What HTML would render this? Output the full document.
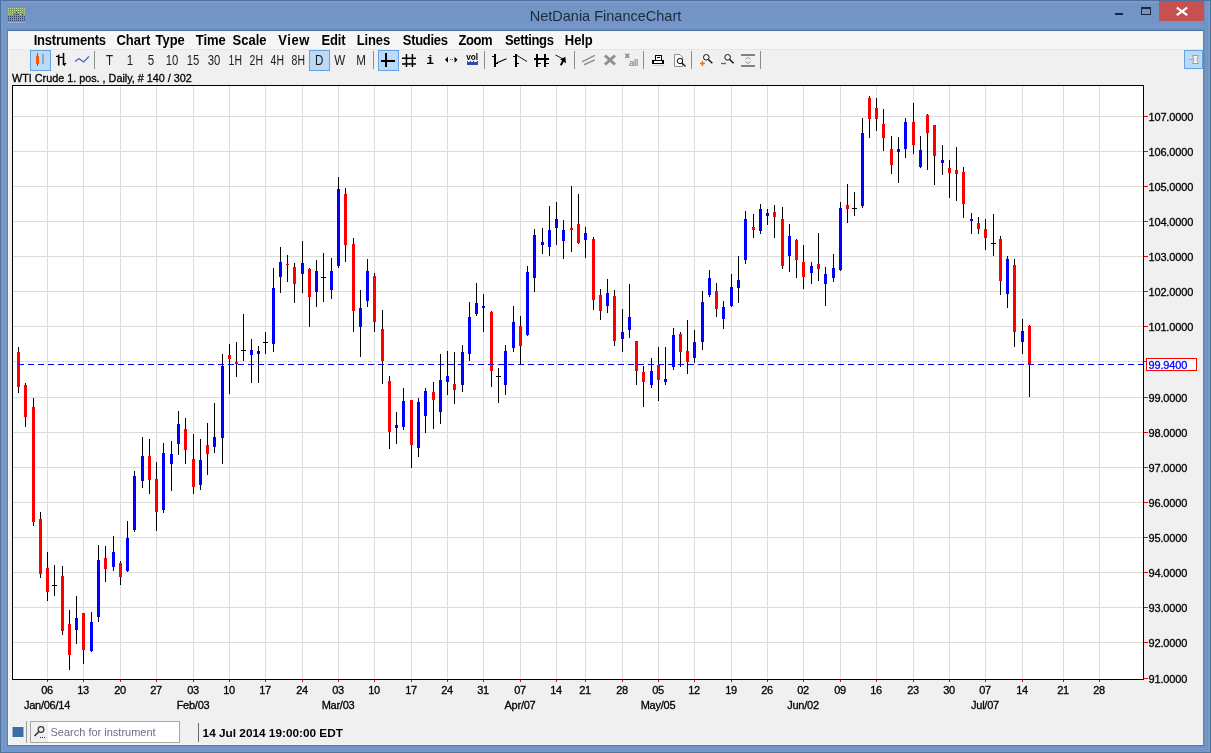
<!DOCTYPE html><html><head><meta charset="utf-8"><title>NetDania FinanceChart</title><style>
html,body{margin:0;padding:0}
body{width:1211px;height:753px;position:relative;overflow:hidden;background:#7295c6;font-family:"Liberation Sans",sans-serif;color:#000}
.a{position:absolute;white-space:pre;line-height:1}
#content{position:absolute;left:8px;top:31px;width:1195px;height:714px;background:#f0f0f0}
#menubar{position:absolute;left:8px;top:31px;width:1195px;height:18px;background:#f6f6f6}
.m{position:absolute;top:33.5px;transform:scaleY(1.06);transform-origin:0 82%;font-weight:bold;font-size:13px;white-space:pre;line-height:14px;color:#000}
.tb{position:absolute;top:52.3px;width:21px;height:16px;text-align:center;font-size:14.5px;line-height:16px;color:#1c1c1c;white-space:pre}
.tb span{display:inline-block;transform:scaleX(.8);transform-origin:50% 50%}
.ax{position:absolute;font-size:11px;letter-spacing:-0.16px;line-height:11px;white-space:pre;color:#000}
.xl{position:absolute;font-size:11px;letter-spacing:-0.25px;line-height:11px;white-space:pre;color:#000;width:80px;text-align:center}
svg{position:absolute;left:0;top:0;z-index:1}
#txt{position:absolute;left:0;top:0;width:1211px;height:753px;z-index:2;will-change:transform}
.ax,.xl,.lbl{-webkit-text-stroke:0.3px currentColor}

</style></head><body>
<div id="content"></div><div id="menubar"></div>
<svg width="1211" height="753" viewBox="0 0 1211 753"><g shape-rendering="crispEdges"><rect x="0" y="0" width="1211" height="1" fill="#50709f"/><rect x="0" y="1" width="1211" height="1" fill="#7a9bcb"/><rect x="0" y="2" width="1211" height="1" fill="#7a9bcb"/><rect x="7" y="24" width="1197" height="1" fill="#6f99d0"/><rect x="7" y="25" width="1197" height="1" fill="#7f94c4"/><rect x="7" y="26" width="1197" height="1" fill="#7f94c4"/><rect x="7" y="27" width="1197" height="1" fill="#7a98d0"/><rect x="7" y="28" width="1197" height="1" fill="#6690c8"/><rect x="7" y="29" width="1197" height="1" fill="#6690c8"/><rect x="7" y="30" width="1197" height="1" fill="#4f709a"/><rect x="0" y="0" width="1" height="753" fill="#4f739e"/><rect x="1" y="1" width="1" height="752" fill="#7096c4"/><rect x="2" y="1" width="1" height="752" fill="#7d9ecf"/><rect x="3" y="1" width="1" height="752" fill="#7191c8"/><rect x="4" y="1" width="1" height="752" fill="#7393cb"/><rect x="5" y="1" width="1" height="752" fill="#7a9ccb"/><rect x="6" y="1" width="1" height="752" fill="#7096c0"/><rect x="7" y="30" width="1" height="723" fill="#5b80ad"/><rect x="1203" y="30" width="1" height="723" fill="#6882a8"/><rect x="1204" y="1" width="1" height="752" fill="#6c8eba"/><rect x="1205" y="1" width="1" height="752" fill="#7396c6"/><rect x="1206" y="1" width="1" height="752" fill="#7396c6"/><rect x="1207" y="1" width="1" height="752" fill="#6f92c2"/><rect x="1208" y="1" width="1" height="752" fill="#7a9ac8"/><rect x="1209" y="1" width="1" height="752" fill="#7a9cc8"/><rect x="1210" y="0" width="1" height="753" fill="#4c6c98"/><rect x="7" y="745" width="1197" height="1" fill="#5a7498"/><rect x="7" y="746" width="1197" height="1" fill="#7098d0"/><rect x="6" y="747" width="1199" height="1" fill="#6690cc"/><rect x="5" y="748" width="1201" height="1" fill="#8098d0"/><rect x="4" y="749" width="1203" height="1" fill="#7a90c0"/><rect x="3" y="750" width="1205" height="1" fill="#7095c4"/><rect x="2" y="751" width="1207" height="1" fill="#6f9ad2"/><rect x="0" y="752" width="1211" height="1" fill="#55759a"/><rect x="8" y="744" width="1195" height="1" fill="#f9f9f9"/><rect x="8" y="50" width="1" height="695" fill="#f7f6f4"/><rect x="1202" y="70" width="1" height="675" fill="#edf2fb"/><rect x="1159" y="1" width="45" height="20" fill="#c75050"/><rect x="1141.5" y="8" width="9" height="6.5" fill="none" stroke="#1c2636" stroke-width="1"/><rect x="1141" y="7" width="10" height="2" fill="#1c2636"/><rect x="1115" y="13" width="8" height="2" fill="#1c2636"/></g><path d="M1176.8 7.6 L1187.2 15.2 M1187.2 7.6 L1176.8 15.2" stroke="#fff" stroke-width="2.1" fill="none"/><g shape-rendering="crispEdges" opacity="0.72"><rect x="8" y="8" width="1" height="1" fill="#dff08a"/><rect x="10" y="8" width="1" height="1" fill="#dff08a"/><rect x="12" y="8" width="1" height="1" fill="#dff08a"/><rect x="14" y="8" width="1" height="1" fill="#dff08a"/><rect x="16" y="8" width="1" height="1" fill="#dff08a"/><rect x="18" y="8" width="1" height="1" fill="#dff08a"/><rect x="20" y="8" width="1" height="1" fill="#dff08a"/><rect x="22" y="8" width="1" height="1" fill="#dff08a"/><rect x="24" y="8" width="1" height="1" fill="#dff08a"/><rect x="8" y="10" width="1" height="1" fill="#dff08a"/><rect x="10" y="10" width="1" height="1" fill="#dff08a"/><rect x="12" y="10" width="1" height="1" fill="#dff08a"/><rect x="14" y="10" width="1" height="1" fill="#dff08a"/><rect x="16" y="10" width="1" height="1" fill="#dff08a"/><rect x="18" y="10" width="1" height="1" fill="#dff08a"/><rect x="20" y="10" width="1" height="1" fill="#dff08a"/><rect x="22" y="10" width="1" height="1" fill="#dff08a"/><rect x="24" y="10" width="1" height="1" fill="#dff08a"/><rect x="8" y="12" width="1" height="1" fill="#dff08a"/><rect x="10" y="12" width="1" height="1" fill="#dff08a"/><rect x="12" y="12" width="1" height="1" fill="#dff08a"/><rect x="14" y="12" width="1" height="1" fill="#dff08a"/><rect x="16" y="12" width="1" height="1" fill="#0e2a1a"/><rect x="18" y="12" width="1" height="1" fill="#dff08a"/><rect x="20" y="12" width="1" height="1" fill="#dff08a"/><rect x="22" y="12" width="1" height="1" fill="#dff08a"/><rect x="24" y="12" width="1" height="1" fill="#dff08a"/><rect x="8" y="14" width="1" height="1" fill="#dff08a"/><rect x="10" y="14" width="1" height="1" fill="#dff08a"/><rect x="12" y="14" width="1" height="1" fill="#dff08a"/><rect x="14" y="14" width="1" height="1" fill="#0e2a1a"/><rect x="16" y="14" width="1" height="1" fill="#0e2a1a"/><rect x="18" y="14" width="1" height="1" fill="#0e2a1a"/><rect x="20" y="14" width="1" height="1" fill="#dff08a"/><rect x="22" y="14" width="1" height="1" fill="#0e2a1a"/><rect x="24" y="14" width="1" height="1" fill="#dff08a"/><rect x="8" y="16" width="1" height="1" fill="#0d1f45"/><rect x="10" y="16" width="1" height="1" fill="#0d1f45"/><rect x="12" y="16" width="1" height="1" fill="#0d1f45"/><rect x="14" y="16" width="1" height="1" fill="#0d1f45"/><rect x="16" y="16" width="1" height="1" fill="#0d1f45"/><rect x="18" y="16" width="1" height="1" fill="#0d1f45"/><rect x="20" y="16" width="1" height="1" fill="#0d1f45"/><rect x="22" y="16" width="1" height="1" fill="#0d1f45"/><rect x="24" y="16" width="1" height="1" fill="#0d1f45"/><rect x="8" y="18" width="1" height="1" fill="#0d1f45"/><rect x="10" y="18" width="1" height="1" fill="#0d1f45"/><rect x="12" y="18" width="1" height="1" fill="#0d1f45"/><rect x="14" y="18" width="1" height="1" fill="#0d1f45"/><rect x="16" y="18" width="1" height="1" fill="#0d1f45"/><rect x="18" y="18" width="1" height="1" fill="#0d1f45"/><rect x="20" y="18" width="1" height="1" fill="#0d1f45"/><rect x="22" y="18" width="1" height="1" fill="#0d1f45"/><rect x="24" y="18" width="1" height="1" fill="#0d1f45"/><rect x="8" y="20" width="1" height="1" fill="#0d1f45"/><rect x="10" y="20" width="1" height="1" fill="#0d1f45"/><rect x="12" y="20" width="1" height="1" fill="#0d1f45"/><rect x="14" y="20" width="1" height="1" fill="#0d1f45"/><rect x="16" y="20" width="1" height="1" fill="#0d1f45"/><rect x="18" y="20" width="1" height="1" fill="#0d1f45"/><rect x="20" y="20" width="1" height="1" fill="#0d1f45"/><rect x="22" y="20" width="1" height="1" fill="#0d1f45"/><rect x="24" y="20" width="1" height="1" fill="#0d1f45"/><rect x="8" y="22" width="1" height="1" fill="#c8d4ec"/><rect x="10" y="22" width="1" height="1" fill="#c8d4ec"/><rect x="12" y="22" width="1" height="1" fill="#c8d4ec"/><rect x="14" y="22" width="1" height="1" fill="#c8d4ec"/><rect x="16" y="22" width="1" height="1" fill="#c8d4ec"/><rect x="18" y="22" width="1" height="1" fill="#c8d4ec"/><rect x="20" y="22" width="1" height="1" fill="#c8d4ec"/><rect x="22" y="22" width="1" height="1" fill="#c8d4ec"/><rect x="24" y="22" width="1" height="1" fill="#c8d4ec"/></g><g shape-rendering="crispEdges"><rect x="8" y="49" width="1195" height="1" fill="#e6e6e6"/><rect x="30" y="50" width="21" height="21" fill="#62a3e6"/><rect x="31" y="51" width="19" height="19" fill="#bcd9f5"/><rect x="309" y="50" width="21" height="21" fill="#62a3e6"/><rect x="310" y="51" width="19" height="19" fill="#bcd9f5"/><rect x="378" y="50" width="21" height="21" fill="#62a3e6"/><rect x="379" y="51" width="19" height="19" fill="#bcd9f5"/><rect x="1184" y="50" width="19" height="19" fill="#62a3e6"/><rect x="1185" y="51" width="17" height="17" fill="#bcd9f5"/><rect x="94" y="51" width="1" height="18" fill="#8c8c8c"/><rect x="373" y="51" width="1" height="18" fill="#8c8c8c"/><rect x="484" y="51" width="1" height="18" fill="#8c8c8c"/><rect x="574" y="51" width="1" height="18" fill="#8c8c8c"/><rect x="643" y="51" width="1" height="18" fill="#8c8c8c"/><rect x="691" y="51" width="1" height="18" fill="#8c8c8c"/><rect x="760" y="51" width="1" height="18" fill="#8c8c8c"/><rect x="37" y="53" width="1" height="13" fill="#d04000"/><rect x="36" y="56" width="3" height="8" fill="#ff5a00"/><rect x="42" y="54" width="2" height="10" fill="#86a6d2"/><g shape-rendering="geometricPrecision"><rect x="57.9" y="54.7" width="1.6" height="10.8" fill="#000"/><rect x="56" y="55.8" width="2" height="1.2" fill="#000"/><rect x="59.4" y="56.8" width="3.4" height="1.2" fill="#000"/><rect x="62.7" y="53" width="1.6" height="12.2" fill="#000"/><rect x="64.2" y="63" width="2" height="1.2" fill="#000"/><rect x="64" y="64" width="1.2" height="1.8" fill="#000"/></g><rect x="385" y="53" width="2" height="14" fill="#000"/><rect x="381" y="60" width="14" height="2" fill="#000"/><g shape-rendering="geometricPrecision"><rect x="405.7" y="54" width="1.5" height="13" fill="#000"/><rect x="411.7" y="54" width="1.5" height="13" fill="#000"/><rect x="402" y="57.5" width="14" height="1.5" fill="#000"/><rect x="402" y="63.2" width="14" height="1.5" fill="#000"/></g><rect x="467" y="62" width="11" height="3" fill="#2a4ea8"/><rect x="467" y="61" width="1" height="1" fill="#2a4ea8"/><rect x="470" y="61" width="1" height="1" fill="#2a4ea8"/><rect x="473" y="61" width="1" height="1" fill="#2a4ea8"/><rect x="477" y="61" width="1" height="1" fill="#2a4ea8"/><rect x="494" y="54" width="2" height="13" fill="#000"/><rect x="492" y="56" width="2" height="1" fill="#000"/><rect x="496" y="63" width="2" height="1" fill="#000"/><rect x="515" y="54" width="2" height="13" fill="#000"/><rect x="513" y="56" width="2" height="1" fill="#000"/><rect x="517" y="63" width="2" height="1" fill="#000"/><rect x="536" y="54" width="2" height="13" fill="#000"/><rect x="544" y="54" width="2" height="13" fill="#000"/><rect x="534" y="58" width="15" height="2" fill="#000"/><rect x="538" y="63" width="3" height="1" fill="#000"/><rect x="546" y="63" width="3" height="1" fill="#000"/><rect x="741" y="54" width="14" height="2" fill="#808080"/><rect x="741" y="65" width="14" height="2" fill="#808080"/></g><path d="M75 61.5 L79 58.5 L83.5 62 L89 56.5" stroke="#4464c4" stroke-width="1.25" fill="none"/><path d="M496.5 63 L506.5 58.7" stroke="#000" stroke-width="1.1" fill="none"/><path d="M517 55.5 L527 61.5" stroke="#000" stroke-width="0.9" fill="none"/><path d="M555.5 55 L564 59.5" stroke="#000" stroke-width="0.9" fill="none"/><path d="M560.8 65.3 L563.6 60" stroke="#000" stroke-width="2" fill="none"/><path d="M565.3 56.8 L566 63.2 L560.2 59.6 Z" fill="#000"/><path d="M582 61.9 L594.8 55.4 M584 64.8 L594.8 59.9" stroke="#8e8e8e" stroke-width="1.5" fill="none"/><path d="M605 55.5 L615 64.5 M615 55.5 L605 64.5" stroke="#8e8e8e" stroke-width="3" fill="none"/><path d="M625.3 53.8 L629.2 58 M629.2 53.8 L625.3 58" stroke="#808080" stroke-width="1.3" fill="none"/><path d="M445 59.7 L448 56.7 L448 62.7 Z M457.5 59.7 L454.5 56.7 L454.5 62.7 Z" fill="#000"/><rect x="450" y="59" width="1" height="1" fill="#555"/><rect x="452" y="59" width="1" height="1" fill="#555"/><g shape-rendering="crispEdges"><rect x="655" y="55" width="6" height="6" fill="#fff" stroke="#000" stroke-width="1"/><rect x="657" y="57" width="3" height="1" fill="#000"/><rect x="652" y="60" width="12" height="4" fill="#000"/><rect x="654" y="61" width="8" height="2" fill="#fff"/><rect x="653" y="65" width="11" height="1" fill="#b8d4f0"/></g><path d="M674.5 54.5 L680 54.5 L682.5 57 L682.5 66.5 L674.5 66.5 Z" fill="#fafafa" stroke="#909090" stroke-width="1"/><circle cx="680" cy="61" r="2.7" fill="#f4f8ff" stroke="#111" stroke-width="1"/><path d="M682 63 L685.5 66.5" stroke="#111" stroke-width="1.3"/><circle cx="706.3" cy="57.3" r="2.8" fill="#f6f6f6" stroke="#111" stroke-width="1"/><path d="M708.4 59.4 L712.3 63.3" stroke="#111" stroke-width="1.4"/><path d="M700 63.5 L705 63.5 M702.5 61 L702.5 66" stroke="#ff6a00" stroke-width="1.4"/><circle cx="727.6" cy="57.3" r="2.8" fill="#f6f6f6" stroke="#111" stroke-width="1"/><path d="M729.7 59.4 L733.6 63.3" stroke="#111" stroke-width="1.4"/><path d="M721 63.5 L726 63.5" stroke="#3a6fd0" stroke-width="1.4"/><path d="M745.5 59.3 L748 57.3 L750.5 59.3 M745.5 61.6 L748 63.6 L750.5 61.6" stroke="#9a9a9a" stroke-width="1" fill="none"/><path d="M1192.5 55.5 L1198.5 55.5 L1197 59.5 L1198.5 63.5 L1192.5 63.5 L1194 59.5 Z" fill="#f4f4ee" stroke="#9c9cac" stroke-width="1"/><path d="M1189 59.5 L1193 59.5" stroke="#a4a4b4" stroke-width="1"/><g shape-rendering="crispEdges"><rect x="12" y="85" width="1132" height="595" fill="#000"/><rect x="13" y="86" width="1130" height="593" fill="#fff"/><rect x="13" y="642" width="1130" height="1" fill="#dcdcdc"/><rect x="13" y="607" width="1130" height="1" fill="#dcdcdc"/><rect x="13" y="572" width="1130" height="1" fill="#dcdcdc"/><rect x="13" y="537" width="1130" height="1" fill="#dcdcdc"/><rect x="13" y="502" width="1130" height="1" fill="#dcdcdc"/><rect x="13" y="467" width="1130" height="1" fill="#dcdcdc"/><rect x="13" y="432" width="1130" height="1" fill="#dcdcdc"/><rect x="13" y="397" width="1130" height="1" fill="#dcdcdc"/><rect x="13" y="361" width="1130" height="1" fill="#dcdcdc"/><rect x="13" y="326" width="1130" height="1" fill="#dcdcdc"/><rect x="13" y="291" width="1130" height="1" fill="#dcdcdc"/><rect x="13" y="256" width="1130" height="1" fill="#dcdcdc"/><rect x="13" y="221" width="1130" height="1" fill="#dcdcdc"/><rect x="13" y="186" width="1130" height="1" fill="#dcdcdc"/><rect x="13" y="151" width="1130" height="1" fill="#dcdcdc"/><rect x="13" y="116" width="1130" height="1" fill="#dcdcdc"/><rect x="47" y="86" width="1" height="593" fill="#dddddd"/><rect x="47" y="680" width="1" height="2" fill="#ff0000"/><rect x="83" y="86" width="1" height="593" fill="#dddddd"/><rect x="83" y="680" width="1" height="2" fill="#ff0000"/><rect x="120" y="86" width="1" height="593" fill="#dddddd"/><rect x="120" y="680" width="1" height="2" fill="#ff0000"/><rect x="156" y="86" width="1" height="593" fill="#dddddd"/><rect x="156" y="680" width="1" height="2" fill="#ff0000"/><rect x="193" y="86" width="1" height="593" fill="#dddddd"/><rect x="193" y="680" width="1" height="2" fill="#ff0000"/><rect x="229" y="86" width="1" height="593" fill="#dddddd"/><rect x="229" y="680" width="1" height="2" fill="#ff0000"/><rect x="265" y="86" width="1" height="593" fill="#dddddd"/><rect x="265" y="680" width="1" height="2" fill="#ff0000"/><rect x="302" y="86" width="1" height="593" fill="#dddddd"/><rect x="302" y="680" width="1" height="2" fill="#ff0000"/><rect x="338" y="86" width="1" height="593" fill="#dddddd"/><rect x="338" y="680" width="1" height="2" fill="#ff0000"/><rect x="374" y="86" width="1" height="593" fill="#dddddd"/><rect x="374" y="680" width="1" height="2" fill="#ff0000"/><rect x="411" y="86" width="1" height="593" fill="#dddddd"/><rect x="411" y="680" width="1" height="2" fill="#ff0000"/><rect x="447" y="86" width="1" height="593" fill="#dddddd"/><rect x="447" y="680" width="1" height="2" fill="#ff0000"/><rect x="483" y="86" width="1" height="593" fill="#dddddd"/><rect x="483" y="680" width="1" height="2" fill="#ff0000"/><rect x="520" y="86" width="1" height="593" fill="#dddddd"/><rect x="520" y="680" width="1" height="2" fill="#ff0000"/><rect x="556" y="86" width="1" height="593" fill="#dddddd"/><rect x="556" y="680" width="1" height="2" fill="#ff0000"/><rect x="585" y="86" width="1" height="593" fill="#dddddd"/><rect x="585" y="680" width="1" height="2" fill="#ff0000"/><rect x="622" y="86" width="1" height="593" fill="#dddddd"/><rect x="622" y="680" width="1" height="2" fill="#ff0000"/><rect x="658" y="86" width="1" height="593" fill="#dddddd"/><rect x="658" y="680" width="1" height="2" fill="#ff0000"/><rect x="694" y="86" width="1" height="593" fill="#dddddd"/><rect x="694" y="680" width="1" height="2" fill="#ff0000"/><rect x="731" y="86" width="1" height="593" fill="#dddddd"/><rect x="731" y="680" width="1" height="2" fill="#ff0000"/><rect x="767" y="86" width="1" height="593" fill="#dddddd"/><rect x="767" y="680" width="1" height="2" fill="#ff0000"/><rect x="803" y="86" width="1" height="593" fill="#dddddd"/><rect x="803" y="680" width="1" height="2" fill="#ff0000"/><rect x="840" y="86" width="1" height="593" fill="#dddddd"/><rect x="840" y="680" width="1" height="2" fill="#ff0000"/><rect x="876" y="86" width="1" height="593" fill="#dddddd"/><rect x="876" y="680" width="1" height="2" fill="#ff0000"/><rect x="913" y="86" width="1" height="593" fill="#dddddd"/><rect x="913" y="680" width="1" height="2" fill="#ff0000"/><rect x="949" y="86" width="1" height="593" fill="#dddddd"/><rect x="949" y="680" width="1" height="2" fill="#ff0000"/><rect x="985" y="86" width="1" height="593" fill="#dddddd"/><rect x="985" y="680" width="1" height="2" fill="#ff0000"/><rect x="1022" y="86" width="1" height="593" fill="#dddddd"/><rect x="1022" y="680" width="1" height="2" fill="#ff0000"/><rect x="1063" y="86" width="1" height="593" fill="#dddddd"/><rect x="1063" y="680" width="1" height="2" fill="#ff0000"/><rect x="1099" y="86" width="1" height="593" fill="#dddddd"/><rect x="1099" y="680" width="1" height="2" fill="#ff0000"/><rect x="1144" y="678" width="4" height="1" fill="#ff0000"/><rect x="1144" y="642" width="4" height="1" fill="#ff0000"/><rect x="1144" y="607" width="4" height="1" fill="#ff0000"/><rect x="1144" y="572" width="4" height="1" fill="#ff0000"/><rect x="1144" y="537" width="4" height="1" fill="#ff0000"/><rect x="1144" y="502" width="4" height="1" fill="#ff0000"/><rect x="1144" y="467" width="4" height="1" fill="#ff0000"/><rect x="1144" y="432" width="4" height="1" fill="#ff0000"/><rect x="1144" y="397" width="4" height="1" fill="#ff0000"/><rect x="1144" y="361" width="4" height="1" fill="#ff0000"/><rect x="1144" y="326" width="4" height="1" fill="#ff0000"/><rect x="1144" y="291" width="4" height="1" fill="#ff0000"/><rect x="1144" y="256" width="4" height="1" fill="#ff0000"/><rect x="1144" y="221" width="4" height="1" fill="#ff0000"/><rect x="1144" y="186" width="4" height="1" fill="#ff0000"/><rect x="1144" y="151" width="4" height="1" fill="#ff0000"/><rect x="1144" y="116" width="4" height="1" fill="#ff0000"/><rect x="1146" y="358" width="51" height="13" fill="#ff0000"/><rect x="1147" y="359" width="49" height="11" fill="#fff"/><rect x="18" y="347" width="1" height="46" fill="#000"/><rect x="17" y="352" width="3" height="35" fill="#ff0000"/><rect x="25" y="383" width="1" height="44" fill="#000"/><rect x="24" y="385" width="3" height="32" fill="#ff0000"/><rect x="33" y="398" width="1" height="128" fill="#000"/><rect x="32" y="407" width="3" height="115" fill="#ff0000"/><rect x="40" y="512" width="1" height="66" fill="#000"/><rect x="39" y="519" width="3" height="55" fill="#ff0000"/><rect x="47" y="552" width="1" height="49" fill="#000"/><rect x="46" y="568" width="3" height="24" fill="#ff0000"/><rect x="54" y="565" width="1" height="31" fill="#000"/><rect x="52" y="585" width="5" height="1" fill="#000"/><rect x="62" y="566" width="1" height="69" fill="#000"/><rect x="61" y="576" width="3" height="55" fill="#ff0000"/><rect x="69" y="610" width="1" height="60" fill="#000"/><rect x="68" y="624" width="3" height="31" fill="#ff0000"/><rect x="76" y="596" width="1" height="48" fill="#000"/><rect x="75" y="618" width="3" height="12" fill="#0000ff"/><rect x="83" y="613" width="1" height="51" fill="#000"/><rect x="82" y="613" width="3" height="37" fill="#ff0000"/><rect x="91" y="612" width="1" height="40" fill="#000"/><rect x="90" y="622" width="3" height="29" fill="#0000ff"/><rect x="98" y="545" width="1" height="77" fill="#000"/><rect x="97" y="560" width="3" height="57" fill="#0000ff"/><rect x="105" y="546" width="1" height="36" fill="#000"/><rect x="104" y="558" width="3" height="11" fill="#ff0000"/><rect x="113" y="536" width="1" height="35" fill="#000"/><rect x="112" y="552" width="3" height="15" fill="#0000ff"/><rect x="120" y="561" width="1" height="24" fill="#000"/><rect x="119" y="563" width="3" height="14" fill="#ff0000"/><rect x="127" y="521" width="1" height="51" fill="#000"/><rect x="126" y="538" width="3" height="33" fill="#0000ff"/><rect x="134" y="471" width="1" height="61" fill="#000"/><rect x="133" y="476" width="3" height="54" fill="#0000ff"/><rect x="142" y="437" width="1" height="51" fill="#000"/><rect x="141" y="456" width="3" height="25" fill="#0000ff"/><rect x="149" y="439" width="1" height="55" fill="#000"/><rect x="148" y="456" width="3" height="24" fill="#ff0000"/><rect x="156" y="462" width="1" height="69" fill="#000"/><rect x="155" y="479" width="3" height="33" fill="#ff0000"/><rect x="163" y="443" width="1" height="70" fill="#000"/><rect x="162" y="453" width="3" height="57" fill="#0000ff"/><rect x="171" y="441" width="1" height="50" fill="#000"/><rect x="170" y="454" width="3" height="10" fill="#0000ff"/><rect x="178" y="411" width="1" height="44" fill="#000"/><rect x="177" y="424" width="3" height="20" fill="#0000ff"/><rect x="185" y="418" width="1" height="46" fill="#000"/><rect x="184" y="429" width="3" height="21" fill="#ff0000"/><rect x="193" y="434" width="1" height="60" fill="#000"/><rect x="192" y="459" width="3" height="28" fill="#ff0000"/><rect x="200" y="439" width="1" height="51" fill="#000"/><rect x="199" y="460" width="3" height="25" fill="#0000ff"/><rect x="207" y="423" width="1" height="52" fill="#000"/><rect x="206" y="445" width="3" height="9" fill="#ff0000"/><rect x="214" y="403" width="1" height="50" fill="#000"/><rect x="213" y="437" width="3" height="10" fill="#0000ff"/><rect x="222" y="354" width="1" height="110" fill="#000"/><rect x="221" y="366" width="3" height="72" fill="#0000ff"/><rect x="229" y="344" width="1" height="50" fill="#000"/><rect x="228" y="355" width="3" height="4" fill="#ff0000"/><rect x="236" y="342" width="1" height="35" fill="#000"/><rect x="235" y="362" width="3" height="2" fill="#ff0000"/><rect x="243" y="314" width="1" height="47" fill="#000"/><rect x="241" y="350" width="5" height="1" fill="#000"/><rect x="251" y="339" width="1" height="44" fill="#000"/><rect x="250" y="350" width="3" height="5" fill="#0000ff"/><rect x="258" y="346" width="1" height="37" fill="#000"/><rect x="257" y="351" width="3" height="3" fill="#0000ff"/><rect x="265" y="332" width="1" height="22" fill="#000"/><rect x="263" y="342" width="5" height="1" fill="#000"/><rect x="273" y="268" width="1" height="84" fill="#000"/><rect x="272" y="288" width="3" height="56" fill="#0000ff"/><rect x="280" y="247" width="1" height="46" fill="#000"/><rect x="279" y="262" width="3" height="15" fill="#0000ff"/><rect x="287" y="255" width="1" height="27" fill="#000"/><rect x="286" y="264" width="3" height="1" fill="#ff0000"/><rect x="294" y="263" width="1" height="40" fill="#000"/><rect x="293" y="267" width="3" height="17" fill="#ff0000"/><rect x="302" y="241" width="1" height="52" fill="#000"/><rect x="301" y="263" width="3" height="11" fill="#0000ff"/><rect x="309" y="268" width="1" height="59" fill="#000"/><rect x="308" y="269" width="3" height="28" fill="#ff0000"/><rect x="316" y="260" width="1" height="47" fill="#000"/><rect x="315" y="271" width="3" height="21" fill="#0000ff"/><rect x="323" y="253" width="1" height="49" fill="#000"/><rect x="321" y="277" width="5" height="1" fill="#000"/><rect x="331" y="258" width="1" height="41" fill="#000"/><rect x="330" y="271" width="3" height="19" fill="#0000ff"/><rect x="338" y="177" width="1" height="91" fill="#000"/><rect x="337" y="189" width="3" height="77" fill="#0000ff"/><rect x="345" y="188" width="1" height="74" fill="#000"/><rect x="344" y="194" width="3" height="51" fill="#ff0000"/><rect x="353" y="238" width="1" height="94" fill="#000"/><rect x="352" y="244" width="3" height="67" fill="#ff0000"/><rect x="360" y="290" width="1" height="67" fill="#000"/><rect x="359" y="308" width="3" height="19" fill="#0000ff"/><rect x="367" y="259" width="1" height="48" fill="#000"/><rect x="366" y="271" width="3" height="30" fill="#0000ff"/><rect x="374" y="273" width="1" height="59" fill="#000"/><rect x="373" y="276" width="3" height="46" fill="#ff0000"/><rect x="382" y="310" width="1" height="74" fill="#000"/><rect x="381" y="329" width="3" height="32" fill="#ff0000"/><rect x="389" y="376" width="1" height="73" fill="#000"/><rect x="388" y="381" width="3" height="51" fill="#ff0000"/><rect x="396" y="412" width="1" height="32" fill="#000"/><rect x="395" y="425" width="3" height="3" fill="#0000ff"/><rect x="403" y="388" width="1" height="42" fill="#000"/><rect x="402" y="401" width="3" height="26" fill="#0000ff"/><rect x="411" y="400" width="1" height="68" fill="#000"/><rect x="410" y="400" width="3" height="45" fill="#ff0000"/><rect x="418" y="398" width="1" height="59" fill="#000"/><rect x="417" y="402" width="3" height="46" fill="#0000ff"/><rect x="425" y="388" width="1" height="45" fill="#000"/><rect x="424" y="391" width="3" height="25" fill="#0000ff"/><rect x="433" y="382" width="1" height="47" fill="#000"/><rect x="432" y="392" width="3" height="8" fill="#ff0000"/><rect x="440" y="354" width="1" height="70" fill="#000"/><rect x="439" y="380" width="3" height="32" fill="#0000ff"/><rect x="447" y="351" width="1" height="44" fill="#000"/><rect x="446" y="376" width="3" height="6" fill="#0000ff"/><rect x="454" y="352" width="1" height="52" fill="#000"/><rect x="453" y="384" width="3" height="6" fill="#ff0000"/><rect x="462" y="345" width="1" height="47" fill="#000"/><rect x="461" y="352" width="3" height="33" fill="#0000ff"/><rect x="469" y="302" width="1" height="59" fill="#000"/><rect x="468" y="317" width="3" height="37" fill="#0000ff"/><rect x="476" y="283" width="1" height="33" fill="#000"/><rect x="475" y="303" width="3" height="11" fill="#0000ff"/><rect x="483" y="294" width="1" height="38" fill="#000"/><rect x="482" y="306" width="3" height="2" fill="#0000ff"/><rect x="491" y="311" width="1" height="76" fill="#000"/><rect x="490" y="312" width="3" height="59" fill="#ff0000"/><rect x="498" y="368" width="1" height="35" fill="#000"/><rect x="496" y="376" width="5" height="1" fill="#000"/><rect x="505" y="345" width="1" height="50" fill="#000"/><rect x="504" y="351" width="3" height="34" fill="#0000ff"/><rect x="513" y="306" width="1" height="46" fill="#000"/><rect x="512" y="322" width="3" height="26" fill="#0000ff"/><rect x="520" y="316" width="1" height="49" fill="#000"/><rect x="519" y="326" width="3" height="20" fill="#ff0000"/><rect x="527" y="266" width="1" height="70" fill="#000"/><rect x="526" y="272" width="3" height="63" fill="#0000ff"/><rect x="534" y="229" width="1" height="63" fill="#000"/><rect x="533" y="235" width="3" height="43" fill="#0000ff"/><rect x="542" y="228" width="1" height="26" fill="#000"/><rect x="541" y="242" width="3" height="3" fill="#0000ff"/><rect x="549" y="206" width="1" height="50" fill="#000"/><rect x="548" y="230" width="3" height="17" fill="#0000ff"/><rect x="556" y="202" width="1" height="43" fill="#000"/><rect x="555" y="219" width="3" height="9" fill="#0000ff"/><rect x="563" y="220" width="1" height="39" fill="#000"/><rect x="562" y="230" width="3" height="11" fill="#0000ff"/><rect x="571" y="186" width="1" height="66" fill="#000"/><rect x="570" y="228" width="3" height="2" fill="#ff0000"/><rect x="578" y="194" width="1" height="50" fill="#000"/><rect x="577" y="224" width="3" height="19" fill="#ff0000"/><rect x="585" y="227" width="1" height="31" fill="#000"/><rect x="584" y="233" width="3" height="7" fill="#0000ff"/><rect x="593" y="237" width="1" height="73" fill="#000"/><rect x="592" y="239" width="3" height="61" fill="#ff0000"/><rect x="600" y="289" width="1" height="31" fill="#000"/><rect x="599" y="295" width="3" height="16" fill="#ff0000"/><rect x="607" y="279" width="1" height="34" fill="#000"/><rect x="606" y="293" width="3" height="13" fill="#0000ff"/><rect x="614" y="290" width="1" height="56" fill="#000"/><rect x="613" y="296" width="3" height="45" fill="#ff0000"/><rect x="622" y="309" width="1" height="43" fill="#000"/><rect x="621" y="332" width="3" height="7" fill="#0000ff"/><rect x="629" y="284" width="1" height="54" fill="#000"/><rect x="628" y="317" width="3" height="13" fill="#0000ff"/><rect x="636" y="341" width="1" height="44" fill="#000"/><rect x="635" y="341" width="3" height="30" fill="#ff0000"/><rect x="643" y="366" width="1" height="41" fill="#000"/><rect x="642" y="372" width="3" height="10" fill="#ff0000"/><rect x="651" y="358" width="1" height="30" fill="#000"/><rect x="650" y="371" width="3" height="14" fill="#0000ff"/><rect x="658" y="347" width="1" height="54" fill="#000"/><rect x="657" y="365" width="3" height="15" fill="#ff0000"/><rect x="665" y="347" width="1" height="38" fill="#000"/><rect x="664" y="379" width="3" height="3" fill="#0000ff"/><rect x="673" y="328" width="1" height="42" fill="#000"/><rect x="672" y="335" width="3" height="32" fill="#0000ff"/><rect x="680" y="332" width="1" height="35" fill="#000"/><rect x="679" y="334" width="3" height="18" fill="#ff0000"/><rect x="687" y="320" width="1" height="54" fill="#000"/><rect x="686" y="351" width="3" height="11" fill="#ff0000"/><rect x="694" y="330" width="1" height="33" fill="#000"/><rect x="693" y="342" width="3" height="16" fill="#0000ff"/><rect x="702" y="291" width="1" height="59" fill="#000"/><rect x="701" y="302" width="3" height="40" fill="#0000ff"/><rect x="709" y="270" width="1" height="27" fill="#000"/><rect x="708" y="278" width="3" height="17" fill="#0000ff"/><rect x="716" y="283" width="1" height="34" fill="#000"/><rect x="715" y="291" width="3" height="18" fill="#ff0000"/><rect x="723" y="301" width="1" height="28" fill="#000"/><rect x="722" y="307" width="3" height="12" fill="#0000ff"/><rect x="731" y="274" width="1" height="33" fill="#000"/><rect x="730" y="287" width="3" height="19" fill="#0000ff"/><rect x="738" y="256" width="1" height="47" fill="#000"/><rect x="737" y="280" width="3" height="8" fill="#0000ff"/><rect x="745" y="211" width="1" height="53" fill="#000"/><rect x="744" y="219" width="3" height="41" fill="#0000ff"/><rect x="753" y="214" width="1" height="24" fill="#000"/><rect x="752" y="227" width="3" height="3" fill="#ff0000"/><rect x="760" y="204" width="1" height="30" fill="#000"/><rect x="759" y="209" width="3" height="22" fill="#0000ff"/><rect x="767" y="209" width="1" height="16" fill="#000"/><rect x="766" y="213" width="3" height="3" fill="#0000ff"/><rect x="774" y="205" width="1" height="33" fill="#000"/><rect x="773" y="212" width="3" height="5" fill="#ff0000"/><rect x="782" y="207" width="1" height="62" fill="#000"/><rect x="781" y="219" width="3" height="47" fill="#ff0000"/><rect x="789" y="224" width="1" height="48" fill="#000"/><rect x="788" y="236" width="3" height="20" fill="#0000ff"/><rect x="796" y="239" width="1" height="39" fill="#000"/><rect x="795" y="240" width="3" height="20" fill="#ff0000"/><rect x="803" y="245" width="1" height="44" fill="#000"/><rect x="802" y="262" width="3" height="15" fill="#ff0000"/><rect x="811" y="262" width="1" height="22" fill="#000"/><rect x="810" y="266" width="3" height="7" fill="#0000ff"/><rect x="818" y="233" width="1" height="48" fill="#000"/><rect x="817" y="264" width="3" height="5" fill="#ff0000"/><rect x="825" y="267" width="1" height="39" fill="#000"/><rect x="824" y="274" width="3" height="10" fill="#0000ff"/><rect x="833" y="254" width="1" height="28" fill="#000"/><rect x="832" y="268" width="3" height="10" fill="#0000ff"/><rect x="840" y="202" width="1" height="69" fill="#000"/><rect x="839" y="208" width="3" height="62" fill="#0000ff"/><rect x="847" y="184" width="1" height="39" fill="#000"/><rect x="846" y="205" width="3" height="4" fill="#ff0000"/><rect x="854" y="192" width="1" height="24" fill="#000"/><rect x="852" y="208" width="5" height="1" fill="#000"/><rect x="862" y="118" width="1" height="90" fill="#000"/><rect x="861" y="133" width="3" height="73" fill="#0000ff"/><rect x="869" y="96" width="1" height="42" fill="#000"/><rect x="868" y="98" width="3" height="21" fill="#ff0000"/><rect x="876" y="98" width="1" height="33" fill="#000"/><rect x="875" y="108" width="3" height="11" fill="#ff0000"/><rect x="883" y="109" width="1" height="42" fill="#000"/><rect x="882" y="124" width="3" height="14" fill="#ff0000"/><rect x="891" y="136" width="1" height="38" fill="#000"/><rect x="890" y="149" width="3" height="16" fill="#ff0000"/><rect x="898" y="137" width="1" height="46" fill="#000"/><rect x="897" y="149" width="3" height="3" fill="#0000ff"/><rect x="905" y="118" width="1" height="40" fill="#000"/><rect x="904" y="122" width="3" height="27" fill="#0000ff"/><rect x="913" y="103" width="1" height="51" fill="#000"/><rect x="912" y="122" width="3" height="23" fill="#ff0000"/><rect x="920" y="136" width="1" height="32" fill="#000"/><rect x="919" y="150" width="3" height="17" fill="#0000ff"/><rect x="927" y="114" width="1" height="56" fill="#000"/><rect x="926" y="115" width="3" height="18" fill="#ff0000"/><rect x="934" y="125" width="1" height="60" fill="#000"/><rect x="933" y="125" width="3" height="31" fill="#ff0000"/><rect x="942" y="145" width="1" height="30" fill="#000"/><rect x="941" y="160" width="3" height="3" fill="#0000ff"/><rect x="949" y="160" width="1" height="38" fill="#000"/><rect x="948" y="168" width="3" height="5" fill="#ff0000"/><rect x="956" y="147" width="1" height="54" fill="#000"/><rect x="955" y="170" width="3" height="4" fill="#ff0000"/><rect x="963" y="167" width="1" height="51" fill="#000"/><rect x="962" y="172" width="3" height="32" fill="#ff0000"/><rect x="971" y="213" width="1" height="21" fill="#000"/><rect x="970" y="219" width="3" height="2" fill="#0000ff"/><rect x="978" y="217" width="1" height="17" fill="#000"/><rect x="977" y="223" width="3" height="6" fill="#ff0000"/><rect x="985" y="219" width="1" height="31" fill="#000"/><rect x="984" y="229" width="3" height="9" fill="#ff0000"/><rect x="993" y="214" width="1" height="42" fill="#000"/><rect x="991" y="243" width="5" height="1" fill="#000"/><rect x="1000" y="236" width="1" height="59" fill="#000"/><rect x="999" y="239" width="3" height="42" fill="#ff0000"/><rect x="1007" y="256" width="1" height="52" fill="#000"/><rect x="1006" y="259" width="3" height="35" fill="#0000ff"/><rect x="1014" y="259" width="1" height="88" fill="#000"/><rect x="1013" y="265" width="3" height="67" fill="#ff0000"/><rect x="1022" y="319" width="1" height="35" fill="#000"/><rect x="1021" y="331" width="3" height="11" fill="#0000ff"/><rect x="1029" y="325" width="1" height="72" fill="#000"/><rect x="1028" y="326" width="3" height="38" fill="#ff0000"/><rect x="18" y="364" width="6" height="1" fill="#0000f0"/><rect x="28" y="364" width="6" height="1" fill="#0000f0"/><rect x="38" y="364" width="6" height="1" fill="#0000f0"/><rect x="48" y="364" width="6" height="1" fill="#0000f0"/><rect x="58" y="364" width="6" height="1" fill="#0000f0"/><rect x="68" y="364" width="6" height="1" fill="#0000f0"/><rect x="78" y="364" width="6" height="1" fill="#0000f0"/><rect x="88" y="364" width="6" height="1" fill="#0000f0"/><rect x="98" y="364" width="6" height="1" fill="#0000f0"/><rect x="108" y="364" width="6" height="1" fill="#0000f0"/><rect x="118" y="364" width="6" height="1" fill="#0000f0"/><rect x="128" y="364" width="6" height="1" fill="#0000f0"/><rect x="138" y="364" width="6" height="1" fill="#0000f0"/><rect x="148" y="364" width="6" height="1" fill="#0000f0"/><rect x="158" y="364" width="6" height="1" fill="#0000f0"/><rect x="168" y="364" width="6" height="1" fill="#0000f0"/><rect x="178" y="364" width="6" height="1" fill="#0000f0"/><rect x="188" y="364" width="6" height="1" fill="#0000f0"/><rect x="198" y="364" width="6" height="1" fill="#0000f0"/><rect x="208" y="364" width="6" height="1" fill="#0000f0"/><rect x="218" y="364" width="6" height="1" fill="#0000f0"/><rect x="228" y="364" width="6" height="1" fill="#0000f0"/><rect x="238" y="364" width="6" height="1" fill="#0000f0"/><rect x="248" y="364" width="6" height="1" fill="#0000f0"/><rect x="258" y="364" width="6" height="1" fill="#0000f0"/><rect x="268" y="364" width="6" height="1" fill="#0000f0"/><rect x="278" y="364" width="6" height="1" fill="#0000f0"/><rect x="288" y="364" width="6" height="1" fill="#0000f0"/><rect x="298" y="364" width="6" height="1" fill="#0000f0"/><rect x="308" y="364" width="6" height="1" fill="#0000f0"/><rect x="318" y="364" width="6" height="1" fill="#0000f0"/><rect x="328" y="364" width="6" height="1" fill="#0000f0"/><rect x="338" y="364" width="6" height="1" fill="#0000f0"/><rect x="348" y="364" width="6" height="1" fill="#0000f0"/><rect x="358" y="364" width="6" height="1" fill="#0000f0"/><rect x="368" y="364" width="6" height="1" fill="#0000f0"/><rect x="378" y="364" width="6" height="1" fill="#0000f0"/><rect x="388" y="364" width="6" height="1" fill="#0000f0"/><rect x="398" y="364" width="6" height="1" fill="#0000f0"/><rect x="408" y="364" width="6" height="1" fill="#0000f0"/><rect x="418" y="364" width="6" height="1" fill="#0000f0"/><rect x="428" y="364" width="6" height="1" fill="#0000f0"/><rect x="438" y="364" width="6" height="1" fill="#0000f0"/><rect x="448" y="364" width="6" height="1" fill="#0000f0"/><rect x="458" y="364" width="6" height="1" fill="#0000f0"/><rect x="468" y="364" width="6" height="1" fill="#0000f0"/><rect x="478" y="364" width="6" height="1" fill="#0000f0"/><rect x="488" y="364" width="6" height="1" fill="#0000f0"/><rect x="498" y="364" width="6" height="1" fill="#0000f0"/><rect x="508" y="364" width="6" height="1" fill="#0000f0"/><rect x="518" y="364" width="6" height="1" fill="#0000f0"/><rect x="528" y="364" width="6" height="1" fill="#0000f0"/><rect x="538" y="364" width="6" height="1" fill="#0000f0"/><rect x="548" y="364" width="6" height="1" fill="#0000f0"/><rect x="558" y="364" width="6" height="1" fill="#0000f0"/><rect x="568" y="364" width="6" height="1" fill="#0000f0"/><rect x="578" y="364" width="6" height="1" fill="#0000f0"/><rect x="588" y="364" width="6" height="1" fill="#0000f0"/><rect x="598" y="364" width="6" height="1" fill="#0000f0"/><rect x="608" y="364" width="6" height="1" fill="#0000f0"/><rect x="618" y="364" width="6" height="1" fill="#0000f0"/><rect x="628" y="364" width="6" height="1" fill="#0000f0"/><rect x="638" y="364" width="6" height="1" fill="#0000f0"/><rect x="648" y="364" width="6" height="1" fill="#0000f0"/><rect x="658" y="364" width="6" height="1" fill="#0000f0"/><rect x="668" y="364" width="6" height="1" fill="#0000f0"/><rect x="678" y="364" width="6" height="1" fill="#0000f0"/><rect x="688" y="364" width="6" height="1" fill="#0000f0"/><rect x="698" y="364" width="6" height="1" fill="#0000f0"/><rect x="708" y="364" width="6" height="1" fill="#0000f0"/><rect x="718" y="364" width="6" height="1" fill="#0000f0"/><rect x="728" y="364" width="6" height="1" fill="#0000f0"/><rect x="738" y="364" width="6" height="1" fill="#0000f0"/><rect x="748" y="364" width="6" height="1" fill="#0000f0"/><rect x="758" y="364" width="6" height="1" fill="#0000f0"/><rect x="768" y="364" width="6" height="1" fill="#0000f0"/><rect x="778" y="364" width="6" height="1" fill="#0000f0"/><rect x="788" y="364" width="6" height="1" fill="#0000f0"/><rect x="798" y="364" width="6" height="1" fill="#0000f0"/><rect x="808" y="364" width="6" height="1" fill="#0000f0"/><rect x="818" y="364" width="6" height="1" fill="#0000f0"/><rect x="828" y="364" width="6" height="1" fill="#0000f0"/><rect x="838" y="364" width="6" height="1" fill="#0000f0"/><rect x="848" y="364" width="6" height="1" fill="#0000f0"/><rect x="858" y="364" width="6" height="1" fill="#0000f0"/><rect x="868" y="364" width="6" height="1" fill="#0000f0"/><rect x="878" y="364" width="6" height="1" fill="#0000f0"/><rect x="888" y="364" width="6" height="1" fill="#0000f0"/><rect x="898" y="364" width="6" height="1" fill="#0000f0"/><rect x="908" y="364" width="6" height="1" fill="#0000f0"/><rect x="918" y="364" width="6" height="1" fill="#0000f0"/><rect x="928" y="364" width="6" height="1" fill="#0000f0"/><rect x="938" y="364" width="6" height="1" fill="#0000f0"/><rect x="948" y="364" width="6" height="1" fill="#0000f0"/><rect x="958" y="364" width="6" height="1" fill="#0000f0"/><rect x="968" y="364" width="6" height="1" fill="#0000f0"/><rect x="978" y="364" width="6" height="1" fill="#0000f0"/><rect x="988" y="364" width="6" height="1" fill="#0000f0"/><rect x="998" y="364" width="6" height="1" fill="#0000f0"/><rect x="1008" y="364" width="6" height="1" fill="#0000f0"/><rect x="1018" y="364" width="6" height="1" fill="#0000f0"/><rect x="1028" y="364" width="6" height="1" fill="#0000f0"/><rect x="1038" y="364" width="6" height="1" fill="#0000f0"/><rect x="1048" y="364" width="6" height="1" fill="#0000f0"/><rect x="1058" y="364" width="6" height="1" fill="#0000f0"/><rect x="1068" y="364" width="6" height="1" fill="#0000f0"/><rect x="1078" y="364" width="6" height="1" fill="#0000f0"/><rect x="1088" y="364" width="6" height="1" fill="#0000f0"/><rect x="1098" y="364" width="6" height="1" fill="#0000f0"/><rect x="1108" y="364" width="6" height="1" fill="#0000f0"/><rect x="1118" y="364" width="6" height="1" fill="#0000f0"/><rect x="1128" y="364" width="6" height="1" fill="#0000f0"/><rect x="1138" y="364" width="5" height="1" fill="#0000f0"/></g><g shape-rendering="crispEdges"><rect x="12" y="727" width="12" height="10" fill="#9ab2d2"/><rect x="13" y="727" width="10" height="10" fill="#3c6ca6"/><rect x="26" y="721" width="1" height="22" fill="#9a9a9a"/><rect x="30" y="721" width="150" height="22" fill="#a6a6a6"/><rect x="31" y="722" width="148" height="20" fill="#fff"/><rect x="31" y="722" width="17" height="20" fill="#f0f0f0"/><rect x="198" y="723" width="1" height="19" fill="#6a6a6a"/><rect x="40" y="737" width="1" height="1" fill="#333"/><rect x="42" y="737" width="1" height="1" fill="#333"/><rect x="44" y="737" width="1" height="1" fill="#333"/></g><circle cx="41" cy="729.5" r="2.8" fill="none" stroke="#333" stroke-width="1.2"/><path d="M39 731.5 L34.5 736" stroke="#333" stroke-width="1.6"/></svg>
<div id="txt"><div class="a" style="left:0;top:0;width:1211px;text-align:center;top:8px;font-size:14.5px;line-height:16px;color:#1e2940">NetDania FinanceChart</div><div class="m" style="left:33.7px;letter-spacing:-0.21px;word-spacing:0px">Instruments</div><div class="m" style="left:116.4px;letter-spacing:0px;word-spacing:1.5px">Chart Type</div><div class="m" style="left:195.7px;letter-spacing:0px;word-spacing:3.1px">Time Scale</div><div class="m" style="left:278.2px;letter-spacing:0.6px;word-spacing:0px">View</div><div class="m" style="left:321.6px;letter-spacing:-0.19px;word-spacing:0px">Edit</div><div class="m" style="left:356.8px;letter-spacing:-0.14px;word-spacing:0px">Lines</div><div class="m" style="left:402.8px;letter-spacing:-0.31px;word-spacing:0px">Studies</div><div class="m" style="left:458.6px;letter-spacing:-0.45px;word-spacing:0px">Zoom</div><div class="m" style="left:504.9px;letter-spacing:-0.33px;word-spacing:0px">Settings</div><div class="m" style="left:564.8px;letter-spacing:-0.06px;word-spacing:0px">Help</div><div class="tb" style="left:98.6px"><span style="transform:scaleX(0.8)">T</span></div><div class="tb" style="left:119.6px"><span style="transform:scaleX(0.8)">1</span></div><div class="tb" style="left:140.6px"><span style="transform:scaleX(0.8)">5</span></div><div class="tb" style="left:161.6px"><span style="transform:scaleX(0.78)">10</span></div><div class="tb" style="left:182.6px"><span style="transform:scaleX(0.78)">15</span></div><div class="tb" style="left:203.6px"><span style="transform:scaleX(0.78)">30</span></div><div class="tb" style="left:224.6px"><span style="transform:scaleX(0.72)">1H</span></div><div class="tb" style="left:245.6px"><span style="transform:scaleX(0.72)">2H</span></div><div class="tb" style="left:266.6px"><span style="transform:scaleX(0.72)">4H</span></div><div class="tb" style="left:287.6px"><span style="transform:scaleX(0.72)">8H</span></div><div class="tb" style="left:308.6px"><span style="transform:scaleX(0.8)">D</span></div><div class="tb" style="left:329.6px"><span style="transform:scaleX(0.8)">W</span></div><div class="tb" style="left:350.6px"><span style="transform:scaleX(0.8)">M</span></div><div class="a lbl" style="left:12px;top:72px;font-size:10.8px;line-height:12px">WTI Crude 1. pos. , Daily, # 140 / 302</div><div class="a" style="left:426.2px;top:52.5px;font-family:'Liberation Mono',monospace;font-weight:bold;font-size:13px;line-height:15px;color:#000">i</div><div class="a" style="left:466.3px;top:52.5px;font-weight:bold;font-size:8.2px;line-height:9px;letter-spacing:0px;color:#000">vol</div><div class="a" style="left:629px;top:57.5px;font-size:9.5px;line-height:10px;letter-spacing:-0.2px;color:#6c6c6c">all</div><div class="ax" style="left:1148.5px;top:674px">91.0000</div><div class="ax" style="left:1148.5px;top:638px">92.0000</div><div class="ax" style="left:1148.5px;top:603px">93.0000</div><div class="ax" style="left:1148.5px;top:568px">94.0000</div><div class="ax" style="left:1148.5px;top:533px">95.0000</div><div class="ax" style="left:1148.5px;top:498px">96.0000</div><div class="ax" style="left:1148.5px;top:463px">97.0000</div><div class="ax" style="left:1148.5px;top:428px">98.0000</div><div class="ax" style="left:1148.5px;top:393px">99.0000</div><div class="ax" style="left:1148.5px;top:322px">101.0000</div><div class="ax" style="left:1148.5px;top:287px">102.0000</div><div class="ax" style="left:1148.5px;top:252px">103.0000</div><div class="ax" style="left:1148.5px;top:217px">104.0000</div><div class="ax" style="left:1148.5px;top:182px">105.0000</div><div class="ax" style="left:1148.5px;top:147px">106.0000</div><div class="ax" style="left:1148.5px;top:112px">107.0000</div><div class="ax" style="left:1148.5px;top:360px;color:#0000ff">99.9400</div><div class="xl" style="left:7px;top:685px">06</div><div class="xl" style="left:43px;top:685px">13</div><div class="xl" style="left:80px;top:685px">20</div><div class="xl" style="left:116px;top:685px">27</div><div class="xl" style="left:153px;top:685px">03</div><div class="xl" style="left:189px;top:685px">10</div><div class="xl" style="left:225px;top:685px">17</div><div class="xl" style="left:262px;top:685px">24</div><div class="xl" style="left:298px;top:685px">03</div><div class="xl" style="left:334px;top:685px">10</div><div class="xl" style="left:371px;top:685px">17</div><div class="xl" style="left:407px;top:685px">24</div><div class="xl" style="left:443px;top:685px">31</div><div class="xl" style="left:480px;top:685px">07</div><div class="xl" style="left:516px;top:685px">14</div><div class="xl" style="left:545px;top:685px">21</div><div class="xl" style="left:582px;top:685px">28</div><div class="xl" style="left:618px;top:685px">05</div><div class="xl" style="left:654px;top:685px">12</div><div class="xl" style="left:691px;top:685px">19</div><div class="xl" style="left:727px;top:685px">26</div><div class="xl" style="left:763px;top:685px">02</div><div class="xl" style="left:800px;top:685px">09</div><div class="xl" style="left:836px;top:685px">16</div><div class="xl" style="left:873px;top:685px">23</div><div class="xl" style="left:909px;top:685px">30</div><div class="xl" style="left:945px;top:685px">07</div><div class="xl" style="left:982px;top:685px">14</div><div class="xl" style="left:1023px;top:685px">21</div><div class="xl" style="left:1059px;top:685px">28</div><div class="xl" style="left:7px;top:700px">Jan/06/14</div><div class="xl" style="left:153px;top:700px">Feb/03</div><div class="xl" style="left:298px;top:700px">Mar/03</div><div class="xl" style="left:480px;top:700px">Apr/07</div><div class="xl" style="left:618px;top:700px">May/05</div><div class="xl" style="left:763px;top:700px">Jun/02</div><div class="xl" style="left:945px;top:700px">Jul/07</div><div class="a" style="left:50.5px;top:726px;font-size:11px;line-height:12px;color:#6e6e86">Search for instrument</div><div class="a" style="left:202.6px;top:726.5px;font-size:11.8px;font-weight:bold;line-height:12px;color:#000">14 Jul 2014 19:00:00 EDT</div></div>
</body></html>
